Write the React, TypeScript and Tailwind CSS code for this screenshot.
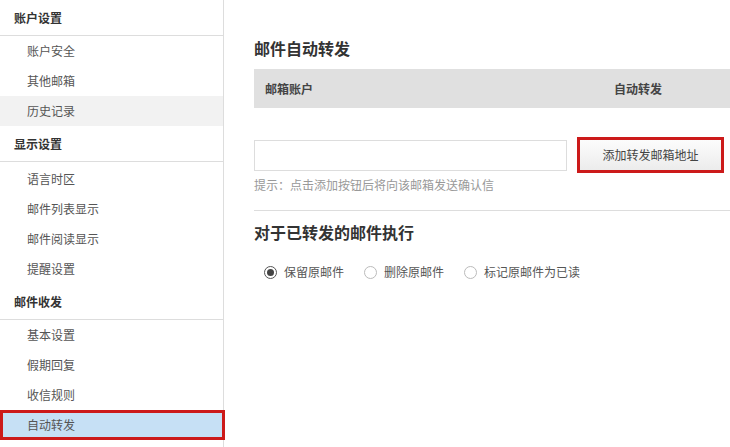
import React from 'react'

type Section = {
  title: string
  items: string[]
  pad?: boolean
}

const sections: Section[] = [
  { title: '账户设置', items: ['账户安全', '其他邮箱', '历史记录'] },
  { title: '显示设置', items: ['语言时区', '邮件列表显示', '邮件阅读显示', '提醒设置'], pad: true },
  { title: '邮件收发', items: ['基本设置', '假期回复', '收信规则', '自动转发'] },
]

const font = { fontFamily: '"Noto Sans CJK SC", "Noto Sans", sans-serif' }

const Radio = ({ checked, label }: { checked?: boolean; label: string }) => (
  <label className="flex items-center gap-[7px] text-[12px] leading-[16px] text-[#555]">
    <span
      className={`flex h-[13px] w-[13px] items-center justify-center rounded-full border ${
        checked ? 'border-[#555]' : 'border-[#bbb]'
      } bg-white`}
    >
      {checked && <span className="h-[7px] w-[7px] rounded-full bg-[#444]" />}
    </span>
    {label}
  </label>
)

export default function App() {
  return (
    <div className="flex h-[447px] w-full overflow-hidden bg-white" style={font}>
      {/* 左侧菜单 */}
      <aside className="w-[224px] shrink-0 border-r border-[#ddd]">
        {sections.map((section) => (
          <div key={section.title}>
            <div className="flex h-[36px] items-center border-b border-[#ddd] pl-[14px] text-[12px] font-bold text-[#333]">
              {section.title}
            </div>
            <ul className={section.pad ? 'pt-[2px]' : ''}>
              {section.items.map((item) => {
                const active = item === '自动转发'
                const hover = item === '历史记录'
                return (
                  <li
                    key={item}
                    className={`flex h-[30px] items-center pl-[27px] text-[12px] text-[#555] ${
                      active
                        ? 'relative z-10 -mr-[2px] h-[28px] bg-[#c6e0f5] outline-[3px] outline-[#cc1a1a] -outline-offset-[3px]'
                        : hover
                          ? 'bg-[#f2f2f2]'
                          : ''
                    }`}
                  >
                    {item}
                  </li>
                )
              })}
            </ul>
          </div>
        ))}
      </aside>

      {/* 主区域 */}
      <main className="flex-1 pl-[30px] pt-[36px]">
        <h2 className="text-[16px] font-bold leading-[24px] text-[#333]">邮件自动转发</h2>

        <div className="mt-[9px] flex h-[39px] items-center bg-[#e0e0e0] text-[12px] font-bold text-[#444]">
          <span className="w-[360px] pl-[11px]">邮箱账户</span>
          <span>自动转发</span>
        </div>

        <div className="mt-[29px] flex items-center gap-[10px]">
          <input className="h-[31px] w-[313px] border border-[#ddd] bg-white px-2 text-[12px] outline-none" />
          <button className="flex h-[36px] w-[147px] items-center justify-center border-[3px] border-[#cc1a1a] bg-gradient-to-b from-[#fcfcfc] to-[#ececec] text-[12px] text-[#444]">
            添加转发邮箱地址
          </button>
        </div>

        <p className="mt-[4px] text-[12px] leading-[16px] text-[#999]">提示：点击添加按钮后将向该邮箱发送确认信</p>

        <div className="mt-[17px] border-t border-[#ddd]" />

        <h2 className="mt-[9px] text-[16px] font-bold leading-[24px] text-[#333]">对于已转发的邮件执行</h2>

        <div className="mt-[20px] flex items-center pl-[10px]">
          <div className="w-[100px]">
            <Radio checked label="保留原邮件" />
          </div>
          <div className="w-[100px]">
            <Radio label="删除原邮件" />
          </div>
          <Radio label="标记原邮件为已读" />
        </div>
      </main>
    </div>
  )
}
